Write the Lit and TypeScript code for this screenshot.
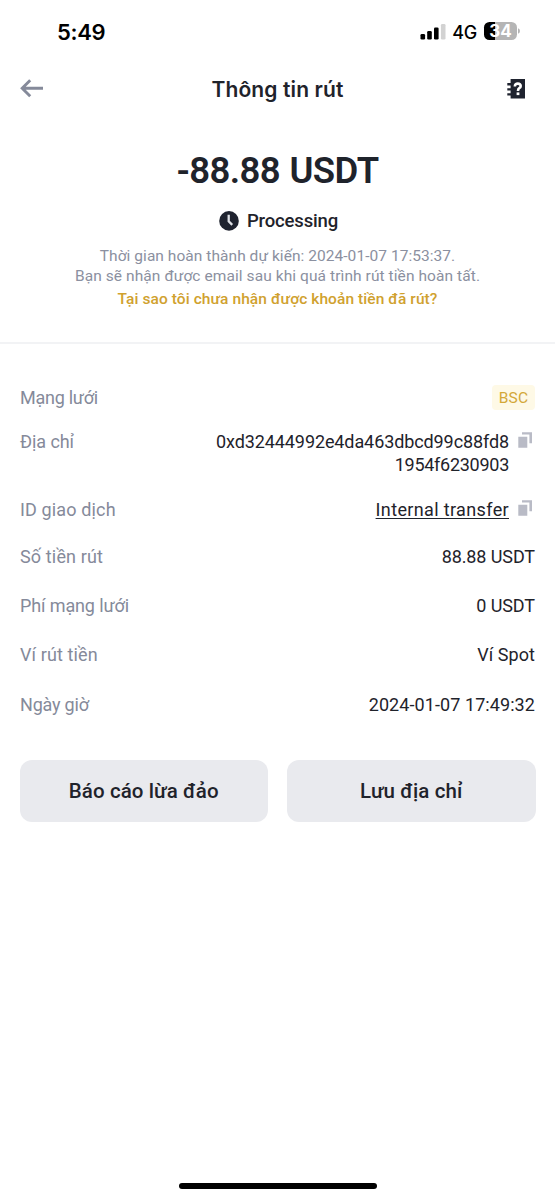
import { LitElement, html, css } from "lit";
import { customElement } from "lit/decorators.js";

interface Line { text: string; track: number; }
interface Row {
  kind: string;
  label: Line;
  value: Line[];
  copy?: boolean;
}

const rows: Row[] = [
  { kind: "network", label: { text: "Mạng lưới", track: -0.27 }, value: [{ text: "BSC", track: 0.2 }] },
  {
    kind: "address",
    label: { text: "Địa chỉ", track: -0.08 },
    value: [
      { text: "0xd32444992e4da463dbcd99c88fd8", track: -0.1 },
      { text: "1954f6230903", track: -0.27 },
    ],
    copy: true,
  },
  { kind: "txid", label: { text: "ID giao dịch", track: 0.14 }, value: [{ text: "Internal transfer", track: 0.36 }], copy: true },
  { kind: "amount", label: { text: "Số tiền rút", track: 0.14 }, value: [{ text: "88.88 USDT", track: -0.1 }] },
  { kind: "fee", label: { text: "Phí mạng lưới", track: -0.12 }, value: [{ text: "0 USDT", track: -0.08 }] },
  { kind: "wallet", label: { text: "Ví rút tiền", track: 0.12 }, value: [{ text: "Ví Spot", track: 0.05 }] },
  { kind: "date", label: { text: "Ngày giờ", track: -0.2 }, value: [{ text: "2024-01-07 17:49:32", track: 0.08 }] },
];

const line = (l: Line, cls = "") => html`<span class=${cls} style="letter-spacing:${l.track}px">${l.text}</span>`;

const copyIcon = html`<svg class="copy" width="14" height="16" viewBox="0 0 14 16">
  <path d="M0.3 4.8H9.3V15.8H0.3Z M4 0.2H14V11.2H11.4V2.6H4Z" fill="#b9bbc6" />
</svg>`;

@customElement("app-root")
export class AppRoot extends LitElement {
  static styles = css`
    :host {
      display: flex;
      flex-direction: column;
      box-sizing: border-box;
      width: 555px;
      height: 1200px;
      overflow: hidden;
      background: #fff;
      color: #1f232b;
      font: 400 18px/23px Roboto, "Noto Sans", sans-serif;
      white-space: nowrap;
    }
    svg { display: block; flex: none; }
    .status {
      display: flex;
      justify-content: space-between;
      height: 64px;
      padding: 0 35px 0 57px;
      color: #000;
      font-family: Inter, sans-serif;
    }
    .time { font-size: 22px; font-weight: 600; line-height: 64px; letter-spacing: -0.3px; }
    .signals { display: flex; align-items: center; height: 62px; }
    .net { font-size: 18px; font-weight: 450; line-height: 62px; margin: 3px 7px 0 6px; letter-spacing: -0.2px; }
    .battery {
      width: 33px;
      height: 18px;
      border-radius: 5.5px;
      background: linear-gradient(90deg, #000 11.5px, #b5b5b5 11.5px);
      color: #fff;
      font: 700 17px/18px Inter, sans-serif;
      text-align: center;
    }
    .nav {
      display: grid;
      grid-template-columns: 30px 1fr 30px;
      align-items: center;
      height: 51px;
      padding: 0 30px 0 20px;
    }
    .nav svg { margin-top: -1px; }
    .nav h1 {
      margin: 0 0 0 10px;
      text-align: center;
      font: 600 21px/51px Inter, sans-serif;
      letter-spacing: 0.12px;
    }
    .nav .book { justify-self: end; }
    .summary {
      display: flex;
      flex-direction: column;
      align-items: center;
      height: 229px;
      box-sizing: border-box;
      padding-top: 35px;
      border-bottom: 2px solid #f2f3f5;
    }
    .sum { font-size: 36.5px; font-weight: 600; line-height: 42px; letter-spacing: -0.6px; word-spacing: 1px; }
    .state {
      display: flex;
      align-items: center;
      gap: 8px;
      margin: 17px 0 0 2px;
      font-size: 18.5px;
      font-weight: 500;
      line-height: 24px;
      letter-spacing: -0.15px;
    }
    .note { color: #8b90a0; font-size: 15.5px; line-height: 20px; letter-spacing: 0.05px; }
    .note.first { margin-top: 13px; }
    .note.second { letter-spacing: 0.08px; }
    .why { color: #d0a12e; font-size: 15.5px; font-weight: 500; line-height: 24px; letter-spacing: 0.08px; margin-top: 1px; }
    .rows { padding: 42px 20px 0; }
    .row { display: flex; justify-content: space-between; }
    .label { color: #858a9a; }
    .right { display: flex; gap: 9px; }
    .value { display: flex; flex-direction: column; align-items: flex-end; }
    .copy { margin: 2px 3px 0 0; }
    .address { margin-top: 21px; }
    .txid { margin-top: 22px; }
    .txid .value span { text-decoration: underline; text-decoration-thickness: 1.3px; text-underline-offset: 2px; }
    .amount { margin-top: 24px; }
    .fee, .wallet { margin-top: 26px; }
    .date { margin-top: 27px; }
    .badge {
      box-sizing: border-box;
      width: 43px;
      height: 25px;
      margin: -1px 0;
      border-radius: 4px;
      background: #fef9e6;
      color: #d3a838;
      font-size: 15.5px;
      line-height: 26px;
      text-align: center;
    }
    .actions {
      display: grid;
      grid-template-columns: 1fr 1fr;
      gap: 19px;
      padding: 43.5px 19.5px 0;
    }
    .actions button {
      height: 62px;
      padding: 0;
      border: 0;
      border-radius: 12px;
      background: #e9eaee;
      color: #1f232b;
      font: 500 20.5px/62px Roboto, "Noto Sans", sans-serif;
      letter-spacing: 0.1px;
    }
    .home { width: 198px; height: 6px; margin: auto auto 11px 179px; border-radius: 3px; background: #000; }
  `;

  render() {
    return html`
      <div class="status">
        <span class="time">5:49</span>
        <div class="signals">
          <svg width="26" height="18" viewBox="0 0 26 18">
            <rect x="0.5" y="12" width="4.6" height="5.6" rx="1.3" />
            <rect x="7.2" y="9" width="4.6" height="8.6" rx="1.3" />
            <rect x="14" y="5.5" width="4.6" height="12.1" rx="1.3" />
            <rect x="20.9" y="2" width="4.6" height="15.6" rx="1.3" fill="#d2d2d2" />
          </svg>
          <span class="net">4G</span>
          <span class="battery">34</span>
          <svg width="3" height="18" viewBox="33 0 3 18">
            <path d="M34 6.3Q36 7 36 9T34 11.7Z" fill="#b5b5b5" />
          </svg>
        </div>
      </div>
      <div class="nav">
        <svg width="24" height="20" viewBox="0 0 24 20">
          <path d="M23 9.3H2M10.2 1.3L2.2 9.3L10.2 17.3" fill="none" stroke="#858a9a" stroke-width="2.9" />
        </svg>
        <h1>Thông tin rút</h1>
        <svg class="book" width="18" height="20" viewBox="0 0 18 20">
          <path d="M3.6 0H18V19.6H3.6V16.6H0.3V14.2H3.6V11.6H0.3V9.2H3.6V6.4H0.3V4H3.6Z" fill="#1f232f" />
          <path d="M7.9 7.4V6.9Q7.9 4.6 10.8 4.6T13.7 7Q13.7 8.4 12.3 9.2Q11 10 11 11.9" fill="none" stroke="#fff" stroke-width="2.6" />
          <rect x="9.6" y="13.4" width="2.8" height="2.7" fill="#fff" />
        </svg>
      </div>
      <div class="summary">
        <div class="sum">-88.88 USDT</div>
        <div class="state">
          <svg width="20" height="20" viewBox="0 0 20 20">
            <circle cx="10" cy="9.9" r="9.8" fill="#1f232f" />
            <path d="M9.7 3.7V10.3L13.2 13.9" fill="none" stroke="#dfe1e6" stroke-width="2.3" />
          </svg>
          <span>Processing</span>
        </div>
        <div class="note first">Thời gian hoàn thành dự kiến: 2024-01-07 17:53:37.</div>
        <div class="note second">Bạn sẽ nhận được email sau khi quá trình rút tiền hoàn tất.</div>
        <div class="why">Tại sao tôi chưa nhận được khoản tiền đã rút?</div>
      </div>
      <div class="rows">
        ${rows.map(
          (r) => html`<div class="row ${r.kind}">
            ${line(r.label, "label")}
            <div class="right">
              ${r.kind === "network"
                ? line(r.value[0], "badge")
                : html`<div class="value">${r.value.map((v) => line(v))}</div>`}
              ${r.copy ? copyIcon : ""}
            </div>
          </div>`
        )}
      </div>
      <div class="actions">
        <button>Báo cáo lừa đảo</button>
        <button>Lưu địa chỉ</button>
      </div>
      <div class="home"></div>
    `;
  }
}
